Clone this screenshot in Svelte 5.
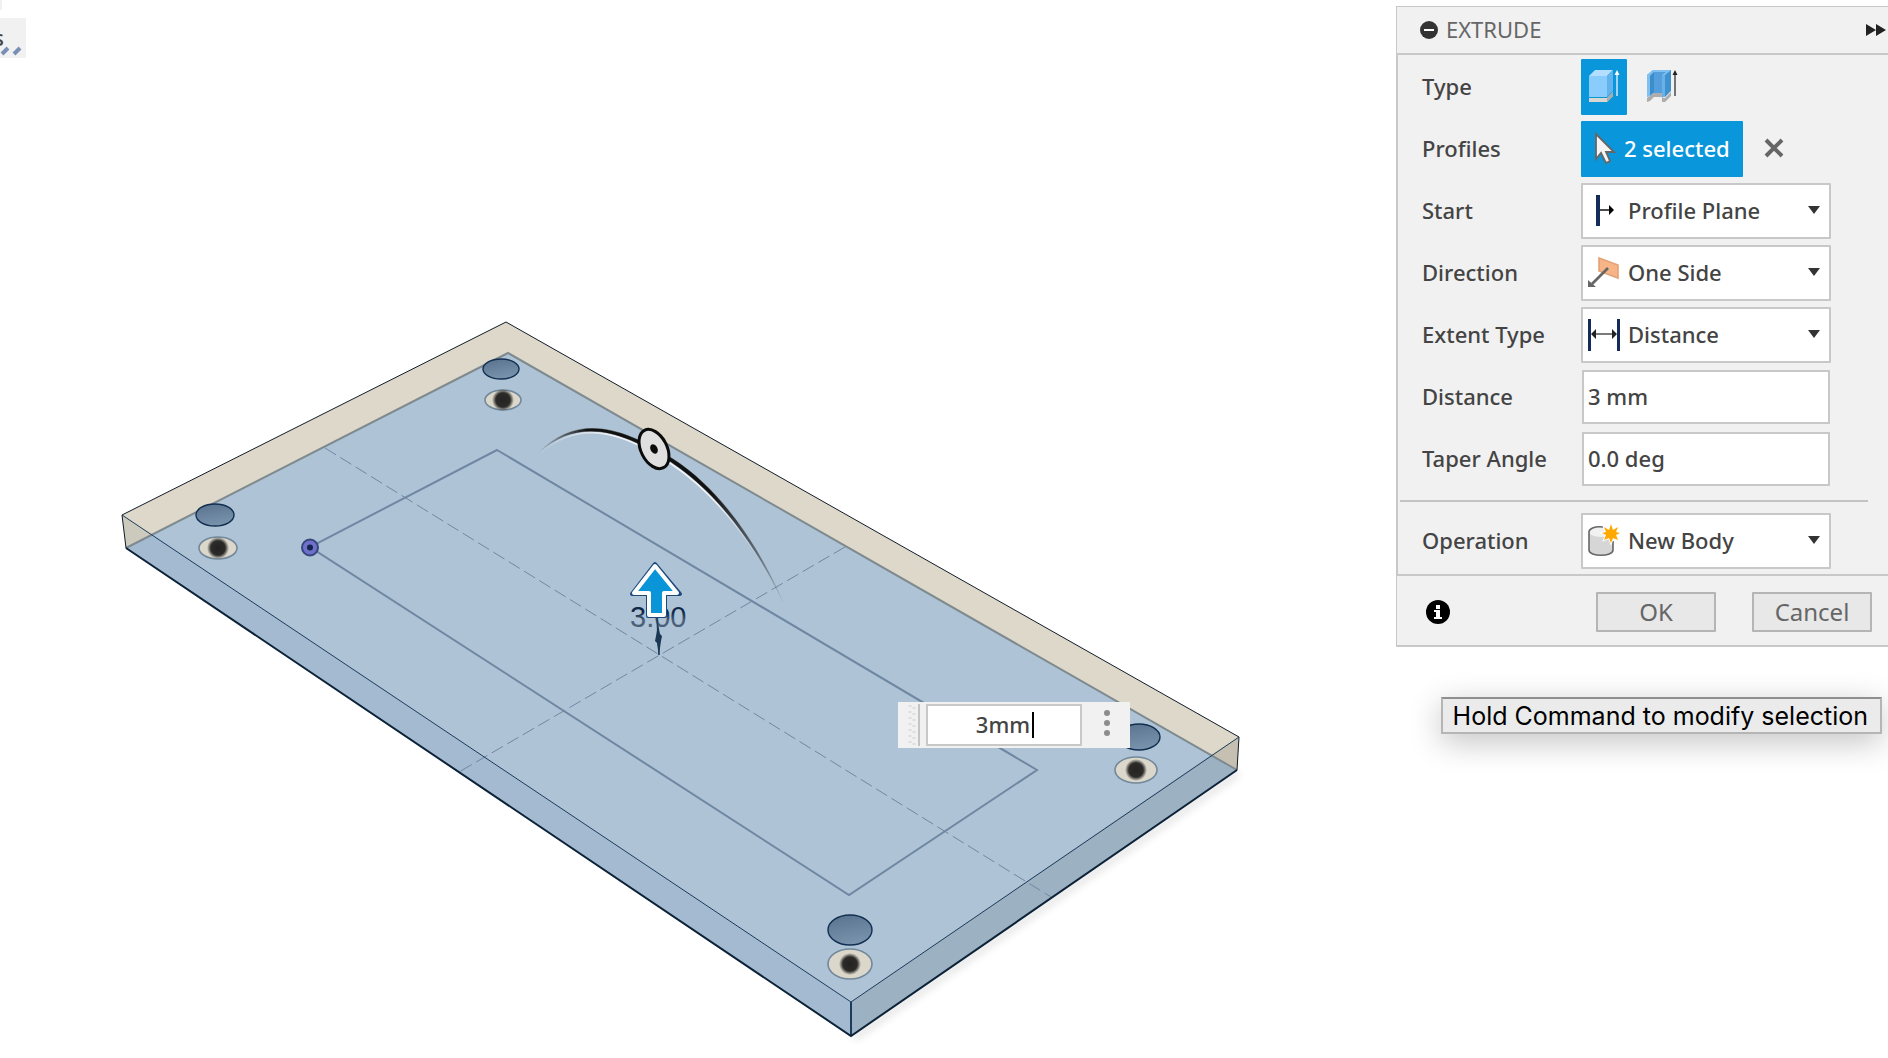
<script>
  let start = $state('Profile Plane');
  let direction = $state('One Side');
  let extent = $state('Distance');
  let operation = $state('New Body');
  let distance = $state('3 mm');
  let taper = $state('0.0 deg');
  let quick = $state('3mm');

  const bores = [
    { x: 501, y: 369, rx: 18, ry: 10 },
    { x: 215, y: 515, rx: 19, ry: 11 },
    { x: 1139, y: 737, rx: 21, ry: 13 },
    { x: 850, y: 930, rx: 22, ry: 15 }
  ];
  const eyes = [
    { x: 503, y: 400, rx: 18, ry: 10 },
    { x: 218, y: 548, rx: 19, ry: 11 },
    { x: 1136, y: 770, rx: 21, ry: 13 },
    { x: 850, y: 964, rx: 22, ry: 15 }
  ];
</script>

{#snippet caret()}
  <svg class="caret" width="12" height="8" viewBox="0 0 12 8" aria-hidden="true"><path d="M0 0h12L6 8z" fill="#333" /></svg>
{/snippet}

<div class="app">
  <main class="viewport">
    <svg class="scene" viewBox="0 0 1396 1058" preserveAspectRatio="xMinYMin meet" role="img" aria-label="Extruded plate">
      <defs>
        <linearGradient id="bore" x1="0.3" y1="0" x2="0.6" y2="1">
          <stop offset="0" stop-color="#5b7590" />
          <stop offset="1" stop-color="#7a94ae" />
        </linearGradient>
        <radialGradient id="pupil">
          <stop offset="0" stop-color="#242321" />
          <stop offset="0.65" stop-color="#2c2b29" />
          <stop offset="1" stop-color="#2c2b29" stop-opacity="0" />
        </radialGradient>
        <linearGradient id="arcFade" gradientUnits="userSpaceOnUse" x1="538" y1="0" x2="786" y2="0">
          <stop offset="0" stop-color="#111" stop-opacity="0" />
          <stop offset="0.2" stop-color="#111" />
          <stop offset="0.7" stop-color="#111" />
          <stop offset="0.88" stop-color="#111" stop-opacity="0.5" />
          <stop offset="1" stop-color="#111" stop-opacity="0" />
        </linearGradient>
        <linearGradient id="arcLight" gradientUnits="userSpaceOnUse" x1="538" y1="0" x2="786" y2="0">
          <stop offset="0" stop-color="#fff" stop-opacity="0" />
          <stop offset="0.3" stop-color="#fff" stop-opacity="0.8" />
          <stop offset="0.7" stop-color="#fff" stop-opacity="0.8" />
          <stop offset="0.9" stop-color="#fff" stop-opacity="0" />
        </linearGradient>
        <linearGradient id="dim" x1="0" y1="0" x2="0" y2="1">
          <stop offset="0.35" stop-color="#10294a" />
          <stop offset="0.6" stop-color="#4a607b" />
        </linearGradient>
        <filter id="soft" x="-10%" y="-10%" width="120%" height="120%"><feGaussianBlur stdDeviation="4" /></filter>
      </defs>

      <path d="M851 1036L1237 770 1239 776 856 1040z" fill="#000" opacity="0.12" filter="url(#soft)" />

      <path d="M122 515L506 322 1239 737 1237 770 508 353 126 548z" fill="#ddd8c9" />
      <path d="M122 515L151 534 126 548z" fill="#cccabd" />
      <path d="M1239 737L1211 755 1237 770z" fill="#c5c0b2" />
      <path d="M126 548L508 353 1237 770 851 1036z" fill="#aec3d5" />
      <path d="M126 548L151 534 851 1002V1036z" fill="#a3bad0" />
      <path d="M1237 770L1211 755 851 1002V1036z" fill="#9cb2c2" />

      <path d="M126 548L508 353 1237 770" fill="none" stroke="#7f8a8f" stroke-width="2" />

      <g fill="none" stroke="#7088a2" stroke-dasharray="13 5">
        <path d="M325 448L1051 897" />
        <path d="M845 547L459 772" />
      </g>
      <path d="M497 450L1037 770 849 895 310 547z" fill="none" stroke="#6f88a2" stroke-width="2" />

      <g fill="none" stroke="#101c28" stroke-width="1">
        <path d="M122 515L506 322 1239 737" />
        <path d="M122 515L126 548" />
        <path d="M1239 737L1237 770" />
      </g>
      <g fill="none" stroke="#1d3c5c" stroke-width="1">
        <path d="M122 515L851 1002 1239 737" />
        <path d="M851 1002V1036" stroke-width="2" />
      </g>
      <path d="M126 548L851 1036 1237 770" fill="none" stroke="#0c2238" stroke-width="2" />

      {#each bores as b}
        <ellipse cx={b.x} cy={b.y} rx={b.rx} ry={b.ry} fill="url(#bore)" stroke="#122f50" stroke-width="1.4" />
      {/each}
      {#each eyes as e}
        <ellipse cx={e.x} cy={e.y} rx={e.rx} ry={e.ry} fill="#dbd7ca" stroke="#72889b" stroke-width="1.6" />
        <circle cx={e.x} cy={e.y} r="11" fill="url(#pupil)" />
      {/each}

      <circle cx="310" cy="547.5" r="8" fill="#6f70cc" stroke="#34467a" stroke-width="2" />
      <circle cx="310" cy="547.5" r="3" fill="#122448" />

      <path d="M540 453C580 419 622 431 670 463S758 548 782 602" fill="none" stroke="url(#arcLight)" stroke-width="2" />
      <path d="M538 453C578 413 622 427 673 459C720 489 759 546 783 602C757 547 718 493 671 462C622 431 580 416 538 453z" fill="url(#arcFade)" stroke="url(#arcFade)" stroke-width="0.4" />
      <g transform="rotate(-27 654 449)">
        <ellipse cx="654" cy="449" rx="13" ry="21" fill="#dfdfdf" stroke="#0b0b0b" stroke-width="3" />
        <ellipse cx="654" cy="449" rx="3.5" ry="5" fill="#0b0b0b" />
      </g>

      <text x="630" y="627" class="dimension" fill="url(#dim)">3.00</text>
      <path d="M657 616L659 655" stroke="#23405f" stroke-width="1.6" />
      <path d="M658 624L660 634 662 636 661 641 659 655 657 643 655 641 656 636z" fill="#1b3756" />
      <path d="M655 564L680 594H665V616H648V594H632z" fill="#0a95d8" stroke="#1d4a7d" stroke-width="4" stroke-linejoin="round" />
      <path d="M655 566L677 593H664V615H649V593H634z" fill="#0a95d8" stroke="#fff" stroke-width="4" stroke-linejoin="round" />
    </svg>

    <div class="clipped-top"></div>
    <div class="clipped-tool">
      <span>s</span>
      <svg width="22" height="10" viewBox="0 0 22 10" aria-hidden="true"><path d="M2 8l6-6M14 8l6-6" stroke="#7890b5" stroke-width="4" /></svg>
    </div>

    <form class="quick" aria-label="Distance entry">
      <svg class="grip" width="8" height="42" viewBox="0 0 8 42" aria-hidden="true"><path d="M2 1v40M6 3v38" stroke="#dedede" stroke-width="3" stroke-dasharray="2 4" /></svg>
      <label class="quick-field">
        <input aria-label="Distance value" bind:value={quick} size="3" />
        <i class="cursor"></i>
      </label>
      <button type="button" class="more" aria-label="More options">
        <svg width="6" height="26" viewBox="0 0 6 26"><g fill="#8c8c8c"><circle cx="3" cy="3" r="3" /><circle cx="3" cy="13" r="3" /><circle cx="3" cy="23" r="3" /></g></svg>
      </button>
    </form>
  </main>

  <aside class="side">
    <section class="panel" aria-labelledby="panel-title">
      <header>
        <button type="button" class="plain" aria-label="Collapse">
          <svg width="18" height="18" viewBox="0 0 18 18"><circle cx="9" cy="9" r="9" fill="#333" /><path d="M4 9h10" stroke="#fff" stroke-width="2" /></svg>
        </button>
        <h1 id="panel-title">EXTRUDE</h1>
        <button type="button" class="plain" aria-label="Expand">
          <svg width="20" height="12" viewBox="0 0 20 12"><path d="M0 0l10 6-10 6zM10 0l10 6-10 6z" fill="#222" /></svg>
        </button>
      </header>

      <div class="rows">
        <div class="row">
          <span class="name">Type</span>
          <button type="button" class="type active" aria-label="Extrude" aria-pressed="true">
            <svg width="32" height="34" viewBox="0 0 32 34">
              <path d="M0 28h18l6-6v4l-6 6H0z" fill="#d9d7d2" />
              <path d="M18 28l6-6v4l-6 6z" fill="#aaa" />
              <path d="M0 6h18v21H0z" fill="#8accfb" />
              <path d="M0 6l6-6h18l-6 6z" fill="#b3deff" />
              <path d="M18 6l6-6v21l-6 6z" fill="#62b2ee" />
              <path d="M28 3v23" stroke="#fff" stroke-width="1.2" />
              <path d="M28 0l2.5 5h-5z" fill="#fff" />
            </svg>
          </button>
          <button type="button" class="type" aria-label="Thin extrude" aria-pressed="false">
            <svg width="32" height="34" viewBox="0 0 32 34">
              <path d="M0 28l7-5h9v5h2l6-6v4l-6 6h-3v-5H7l-4 4-3 1z" fill="#adadad" />
              <path d="M0 5l6-5h18l-6 5v22h-3v-4H7l-7 4z" fill="#529fdc" />
              <path d="M0 5l6-5h18l-6 5h-3l4-3H7L3 6v20l-3 1z" fill="#7fc0f2" />
              <path d="M3 6l4-4v20l-4 4z" fill="#3c8dca" />
              <path d="M18 5l6-5v21l-6 6z" fill="#4092ce" />
              <path d="M15 5h3v22h-3z" fill="#69b1e9" />
              <path d="M28 3v23" stroke="#222" stroke-width="1.2" />
              <path d="M28 0l2.5 5h-5z" fill="#222" />
            </svg>
          </button>
        </div>

        <div class="row">
          <span class="name">Profiles</span>
          <button type="button" class="selected">
            <svg width="20" height="32" viewBox="0 0 20 32" aria-hidden="true"><path d="M1 2v25l5-6 5 10 4-2-4-9h8z" fill="#f4f4f4" stroke="#666" stroke-width="1.8" /></svg>
            <span>2 selected</span>
          </button>
          <button type="button" class="plain clear" aria-label="Clear selection">
            <svg width="18" height="18" viewBox="0 0 18 18"><path d="M1 1l16 16M17 1L1 17" stroke="#666" stroke-width="4" /></svg>
          </button>
        </div>

        <div class="row">
          <label class="name" for="start">Start</label>
          <div class="combo">
            <svg class="ico" width="32" height="32" viewBox="0 0 32 32" aria-hidden="true"><path d="M8 0h4v31H8z" fill="#132c5c" /><path d="M12 15h9" stroke="#000" stroke-width="1.4" /><path d="M21 10l5 5-5 5z" /></svg>
            <select id="start" bind:value={start}><option>Profile Plane</option><option>Offset</option><option>Object</option></select>
            {@render caret()}
          </div>
        </div>

        <div class="row">
          <label class="name" for="direction">Direction</label>
          <div class="combo">
            <svg class="ico" width="32" height="32" viewBox="0 0 32 32" aria-hidden="true"><path d="M11 1l19 7v13l-19-7z" fill="#f6b487" stroke="#e3a277" stroke-width="1.6" /><path d="M20 11L4 27" stroke="#666" stroke-width="2.6" /><path d="M0 23v7h8z" fill="#666" /></svg>
            <select id="direction" bind:value={direction}><option>One Side</option><option>Two Sides</option><option>Symmetric</option></select>
            {@render caret()}
          </div>
        </div>

        <div class="row">
          <label class="name" for="extent">Extent Type</label>
          <div class="combo">
            <svg class="ico" width="32" height="32" viewBox="0 0 32 32" aria-hidden="true"><path d="M0 0h3v32H0zM29 0h3v32h-3z" fill="#132c5c" /><path d="M7 15h18" stroke="#222" stroke-width="1.2" /><path d="M3 15l5-5v10zM29 15l-5-5v10z" fill="#222" /></svg>
            <select id="extent" bind:value={extent}><option>Distance</option><option>To Object</option><option>All</option></select>
            {@render caret()}
          </div>
        </div>

        <div class="row">
          <label class="name" for="distance">Distance</label>
          <input id="distance" class="field" bind:value={distance} />
        </div>

        <div class="row">
          <label class="name" for="taper">Taper Angle</label>
          <input id="taper" class="field" bind:value={taper} />
        </div>

        <hr />

        <div class="row">
          <label class="name" for="operation">Operation</label>
          <div class="combo">
            <svg class="ico" width="32" height="32" viewBox="0 0 32 32" aria-hidden="true">
              <path d="M1 7v18c0 7 24 7 24 0V7z" fill="#d6d6d6" />
              <ellipse cx="13" cy="7" rx="12" ry="5" fill="#f1f1f1" />
              <path d="M15 2C6 1 1 4 1 7v18c0 7 24 7 24 0v-9" fill="none" stroke="#666" stroke-width="1.6" />
              <path d="M23-1l2 6 5-3-2 5 4 1-4 2 2 5-5-2-2 5-2-5-5 2 2-5-4-2 4-1-2-5 5 3z" fill="#ffa800" stroke="#fff" stroke-width="2" paint-order="stroke" />
            </svg>
            <select id="operation" bind:value={operation}><option>New Body</option><option>Join</option><option>Cut</option></select>
            {@render caret()}
          </div>
        </div>
      </div>

      <footer>
        <button type="button" class="plain" aria-label="Information">
          <svg width="24" height="24" viewBox="0 0 24 24"><circle cx="12" cy="12" r="12" /><path d="M10 5h4v4h-4zM8 10h6v7h2v2H8v-2h2v-5H8z" fill="#fff" /></svg>
        </button>
        <button type="button" class="action ok">OK</button>
        <button type="button" class="action">Cancel</button>
      </footer>
    </section>

    <div class="tip" role="tooltip">Hold Command to modify selection</div>
  </aside>
</div>

<style>
  :global(body) {
    margin: 0;
    background: #fff;
  }
  .app {
    display: grid;
    grid-template-columns: minmax(0, 1fr) 492px;
    min-height: 100vh;
    overflow: hidden;
    font-family: 'Noto Sans', 'Open Sans', sans-serif;
    font-size: 22px;
    font-weight: 500;
    line-height: 30px;
    color: #444;
  }
  button, input, select {
    font: inherit;
    color: inherit;
    box-sizing: border-box;
    margin: 0;
  }
  svg {
    display: block;
    overflow: visible;
    flex: none;
  }
  .viewport {
    position: relative;
  }
  .scene {
    width: 100%;
  }
  .dimension {
    font-family: 'Liberation Sans', sans-serif;
    font-size: 29px;
    font-weight: 400;
  }
  .clipped-top {
    position: absolute;
    left: 0;
    top: 0;
    width: 2px;
    height: 10px;
    background: #f1f1f1;
  }
  .clipped-tool {
    position: absolute;
    left: 0;
    top: 18px;
    width: 26px;
    height: 40px;
    background: #f1f1f1;
    overflow: hidden;
  }
  .clipped-tool span {
    position: absolute;
    right: 22px;
    top: 4px;
  }
  .clipped-tool svg {
    position: absolute;
    left: 0;
    top: 28px;
  }
  .quick {
    position: absolute;
    left: 898px;
    top: 702px;
    display: flex;
    align-items: center;
    width: 232px;
    height: 46px;
    box-sizing: border-box;
    padding: 0 20px 0 10px;
    background: #f1f1f1;
  }
  .quick-field {
    display: flex;
    align-items: center;
    justify-content: center;
    box-sizing: border-box;
    width: 156px;
    height: 42px;
    margin-left: 6px;
    background: #fff;
    border: 2px solid #c8c8c8;
    position: relative;
  }
  .grip {
    padding-right: 2px;
    border-right: 2px solid #c3c3c3;
  }
  .quick-field input {
    width: 100%;
    padding: 0 2px 2px 0;
    border: 0;
    outline: 0;
    background: none;
    text-align: center;
  }
  .cursor {
    position: absolute;
    left: 104px;
    top: 6px;
    width: 2px;
    height: 26px;
    background: #000;
  }
  .more {
    margin-left: auto;
    padding: 0 0 4px;
    border: 0;
    background: none;
  }
  .side {
    padding-top: 6px;
  }
  .panel {
    border: solid #c8c8c8;
    border-width: 1px 0 2px 1px;
    background: #f1f1f1;
  }
  header {
    display: flex;
    align-items: center;
    height: 46px;
    padding: 0 2px 0 23px;
    border-bottom: 2px solid #c8c8c8;
  }
  h1 {
    margin: 0 auto 0 8px;
    padding-bottom: 2px;
    font-size: 22px;
    font-weight: 400;
    line-height: 30px;
    color: #666;
  }
  .plain {
    padding: 0;
    border: 0;
    background: none;
  }
  .rows {
    display: flex;
    flex-direction: column;
    gap: 6px;
    padding: 4px 0 5px;
    border-left: 1px solid #c8c8c8;
  }
  .row {
    display: flex;
    align-items: center;
    height: 56px;
    padding-left: 24px;
  }
  .name {
    width: 159px;
    flex: none;
    padding-bottom: 2px;
  }
  .type {
    display: flex;
    align-items: center;
    justify-content: flex-start;
    width: 46px;
    height: 56px;
    margin-right: 12px;
    padding: 0 8px;
    border: 0;
    background: none;
  }
  .active, .selected {
    background: #0a96da;
    border-radius: 1px;
  }
  .selected {
    display: flex;
    align-items: center;
    gap: 9px;
    height: 56px;
    width: 162px;
    padding: 0 0 2px 14px;
    border: 0;
    color: #fff;
    white-space: nowrap;
  }
  .clear {
    margin-left: 22px;
    padding-bottom: 2px;
  }
  .combo {
    display: flex;
    align-items: center;
    box-sizing: border-box;
    width: 250px;
    height: 56px;
    padding: 0 9px 0 5px;
    border: 2px solid #c8c8c8;
    border-radius: 1px;
    background: #fff;
  }
  .combo select {
    flex: 1;
    min-width: 0;
    height: 52px;
    margin-left: 8px;
    padding: 0 0 2px;
    border: 0;
    background: none;
    appearance: none;
  }
  .caret {
    padding-bottom: 2px;
    pointer-events: none;
  }
  .field {
    width: 248px;
    height: 54px;
    margin-left: 1px;
    padding: 0 5px 2px 4px;
    border: 2px solid #c8c8c8;
    background: #fff;
  }
  hr {
    align-self: stretch;
    margin: 7px 20px 5px 2px;
    border: 0;
    border-top: 2px solid #c3c3c3;
  }
  footer {
    display: flex;
    align-items: center;
    height: 69px;
    padding: 2px 16px 0 29px;
    box-sizing: border-box;
    border-top: 2px solid #c8c8c8;
    height: 71px;
  }
  .action {
    width: 120px;
    height: 40px;
    padding: 0;
    border: 2px solid #b5b5b5;
    border-radius: 1px;
    background: #e8e8e8;
    color: #666;
    font-size: 24px;
    font-weight: 400;
    line-height: 32px;
  }
  .ok {
    margin: 0 36px 0 auto;
  }
  .tip {
    box-sizing: border-box;
    width: max-content;
    margin: 50px 6px 0 auto;
    padding: 1px 12px 0 10px;
    border: 2px solid #b5b5b5;
    border-top-color: #8f8f8f;
    background: #ebebeb;
    color: #000;
    font-family: Inter, sans-serif;
    font-size: 25px;
    font-weight: 400;
    line-height: 32px;
    box-shadow: 0 8px 32px rgba(0, 0, 0, 0.24);
  }
</style>
